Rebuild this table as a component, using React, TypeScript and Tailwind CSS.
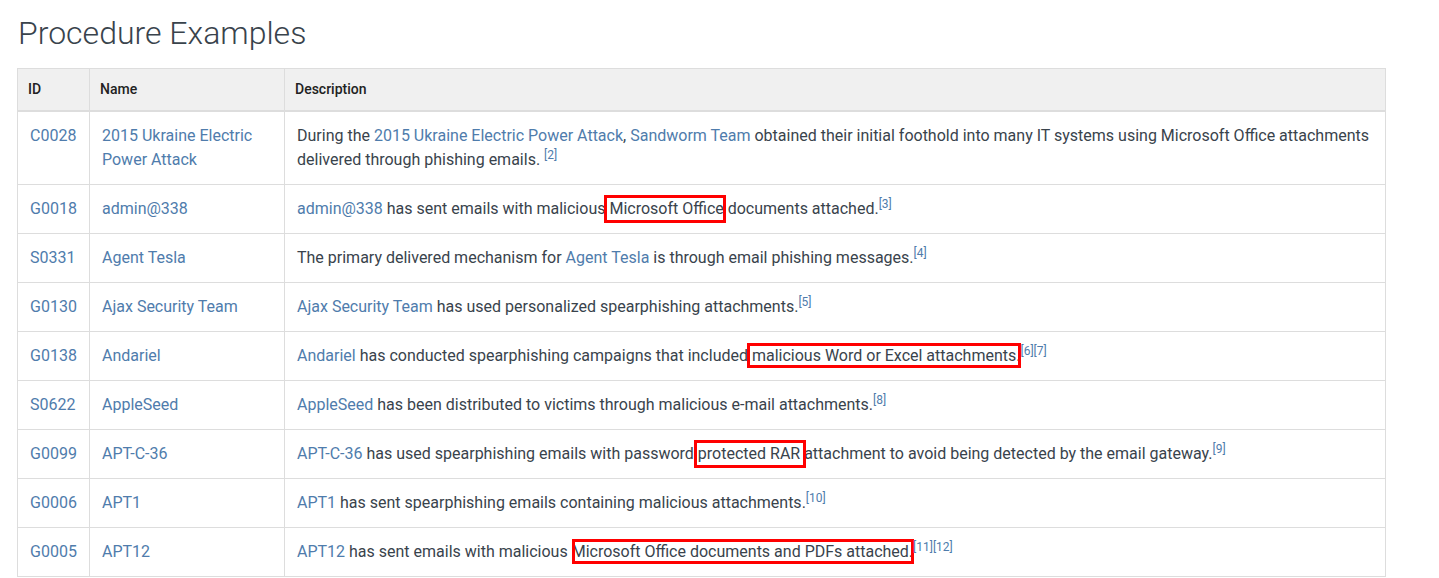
import React from "react";

type Part = string | { link: string } | { box: string; b: [number, number, number, number] } | { sup: string };

const rows: { id: string; name: string; desc: Part[] }[] = [
  {
    id: "C0028",
    name: "2015 Ukraine Electric Power Attack",
    desc: [
      "During the ",
      { link: "2015 Ukraine Electric Power Attack" },
      ", ",
      { link: "Sandworm Team" },
      " obtained their initial foothold into many IT systems using Microsoft Office attachments delivered through phishing emails. ",
      { sup: "[2]" },
    ],
  },
  {
    id: "G0018",
    name: "admin@338",
    desc: [
      { link: "admin@338" },
      " has sent emails with malicious ",
      { box: "Microsoft Office", b: [-5, -4, -2, -5] },
      " documents attached.",
      { sup: "[3]" },
    ],
  },
  {
    id: "S0331",
    name: "Agent Tesla",
    desc: [
      "The primary delivered mechanism for ",
      { link: "Agent Tesla" },
      " is through email phishing messages.",
      { sup: "[4]" },
    ],
  },
  {
    id: "G0130",
    name: "Ajax Security Team",
    desc: [{ link: "Ajax Security Team" }, " has used personalized spearphishing attachments.", { sup: "[5]" }],
  },
  {
    id: "G0138",
    name: "Andariel",
    desc: [
      { link: "Andariel" },
      " has conducted spearphishing campaigns that included ",
      { box: "malicious Word or Excel attachments.", b: [-5, -3, -1, -3] },
      { sup: "[6][7]" },
    ],
  },
  {
    id: "S0622",
    name: "AppleSeed",
    desc: [{ link: "AppleSeed" }, " has been distributed to victims through malicious e-mail attachments.", { sup: "[8]" }],
  },
  {
    id: "G0099",
    name: "APT-C-36",
    desc: [
      { link: "APT-C-36" },
      " has used spearphishing emails with password ",
      { box: "protected RAR", b: [-4, -4, -6, -5] },
      " attachment to avoid being detected by the email gateway.",
      { sup: "[9]" },
    ],
  },
  {
    id: "G0006",
    name: "APT1",
    desc: [{ link: "APT1" }, " has sent spearphishing emails containing malicious attachments.", { sup: "[10]" }],
  },
  {
    id: "G0005",
    name: "APT12",
    desc: [
      { link: "APT12" },
      " has sent emails with malicious ",
      { box: "Microsoft Office documents and PDFs attached.", b: [0, -3, -1, -3] },
      { sup: "[11][12]" },
    ],
  },
];

function Desc({ parts }: { parts: Part[] }) {
  return (
    <>
      {parts.map((p, i) => {
        if (typeof p === "string") return <span key={i}>{p}</span>;
        if ("link" in p)
          return (
            <a key={i} className="text-[#4f7cac]">
              {p.link}
            </a>
          );
        if ("sup" in p)
          return (
            <sup key={i} className="text-[12px] text-[#4f7cac]">
              {p.sup}
            </sup>
          );
        return (
          <span key={i} className="relative">
            {p.box}
            <span
              className="absolute border-[3px] border-[#ff0000]"
              style={{ left: p.b[0], top: p.b[1], right: p.b[2], bottom: p.b[3] }}
            />
          </span>
        );
      })}
    </>
  );
}

export default function App() {
  return (
    <div
      className="bg-white text-[#39434c] pl-[17px] pr-[53px] pt-[14px]"
      style={{ fontFamily: "Roboto, 'Liberation Sans', sans-serif" }}
    >
      <h2 className="text-[32px] font-light leading-[38px] mb-[16px] pl-[1px]">Procedure Examples</h2>

      <table className="w-full border-collapse border border-[#dddddd] text-[16px] leading-[24px]">
        <thead>
          <tr className="bg-[#f0f0f0] text-[14px] font-medium text-[#222]">
            <th className="w-[72px] border border-[#dddddd] border-b-2 px-[10px] pt-[10px] pb-[11px] text-left leading-[20px] font-medium">
              ID
            </th>
            <th className="w-[195px] border border-[#dddddd] border-b-2 px-[10px] pt-[10px] pb-[11px] text-left leading-[20px] font-medium">
              Name
            </th>
            <th className="border border-[#dddddd] border-b-2 px-[10px] pt-[10px] pb-[11px] text-left leading-[20px] font-medium">
              Description
            </th>
          </tr>
        </thead>
        <tbody>
          {rows.map((r) => (
            <tr key={r.id}>
              <td className="border border-[#dddddd] px-[12px] py-[12px] align-top text-[#4f7cac]">{r.id}</td>
              <td className="border border-[#dddddd] px-[12px] py-[12px] align-top text-[#4f7cac]">{r.name}</td>
              <td className="border border-[#dddddd] px-[12px] py-[12px] align-top">
                <Desc parts={r.desc} />
              </td>
            </tr>
          ))}
        </tbody>
      </table>
    </div>
  );
}
